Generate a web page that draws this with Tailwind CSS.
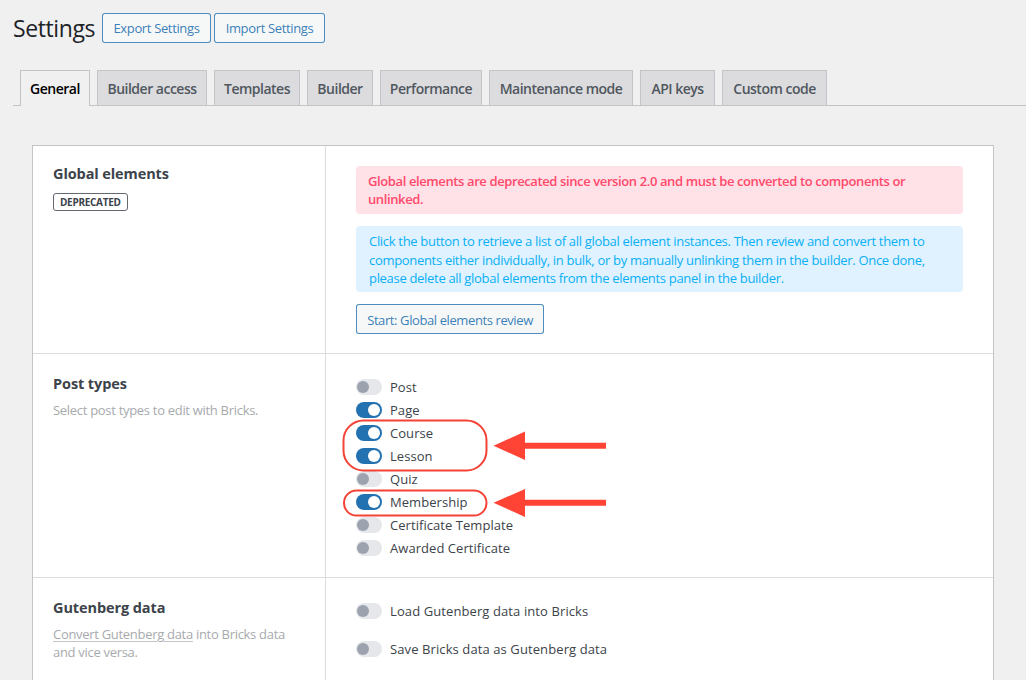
<!DOCTYPE html>
<html lang="en">
<head>
  <meta charset="UTF-8" />
  <title>Settings</title>
  <script src="https://cdn.jsdelivr.net/npm/@tailwindcss/browser@4"></script>
</head>
<body class="relative h-[680px] w-[1026px] overflow-hidden bg-[#f0f0f1] font-['Open_Sans','Noto_Sans',sans-serif] text-[13px] text-[#3c434a]">

  <div class="flex items-center pl-[13px] pt-[13px]">
    <h1 class="w-[89px] text-[23px] leading-[30px] tracking-[-0.4px] text-[#1d2327]">Settings</h1>
    <a class="mr-[3px] flex h-[30px] w-[109px] items-center justify-center rounded-[3px] border border-[#2271b1]/80 bg-[#f6f7f7] pt-[2px] text-[13px] tracking-[-0.35px] text-[#2271b1]/90">Export Settings</a>
    <a class="flex h-[30px] w-[111px] items-center justify-center rounded-[3px] border border-[#2271b1]/80 bg-[#f6f7f7] pt-[2px] text-[13px] tracking-[-0.35px] text-[#2271b1]/90">Import Settings</a>
  </div>

  <nav class="mt-[27px] ml-[13px] flex h-[36px] items-end gap-[7px] border-b border-[#c3c4c7] pl-[7px] text-[14px] font-semibold tracking-[-0.5px] text-[#50575e]">
    <a class="-mb-px flex h-[36px] w-[70px] items-center justify-center border border-b-0 border-[#c3c4c7] bg-[#f0f0f1] text-[#000]">General</a>
    <a class="flex h-[35px] w-[110px] items-center justify-center border border-b-0 border-[#c3c4c7] bg-[#dcdcde]">Builder access</a>
    <a class="flex h-[35px] w-[86px] items-center justify-center border border-b-0 border-[#c3c4c7] bg-[#dcdcde]">Templates</a>
    <a class="flex h-[35px] w-[66px] items-center justify-center border border-b-0 border-[#c3c4c7] bg-[#dcdcde]">Builder</a>
    <a class="flex h-[35px] w-[102px] items-center justify-center border border-b-0 border-[#c3c4c7] bg-[#dcdcde]">Performance</a>
    <a class="flex h-[35px] w-[144px] items-center justify-center border border-b-0 border-[#c3c4c7] bg-[#dcdcde]">Maintenance mode</a>
    <a class="flex h-[35px] w-[75px] items-center justify-center border border-b-0 border-[#c3c4c7] bg-[#dcdcde]">API keys</a>
    <a class="flex h-[35px] w-[105px] items-center justify-center border border-b-0 border-[#c3c4c7] bg-[#dcdcde]">Custom code</a>
  </nav>

  <main class="mt-[39px] ml-[32px] w-[962px] border border-[#c3c4c7] bg-white">
    <section class="grid h-[208px] grid-cols-[293px_1fr] border-b border-[#dcdcde]">
      <div class="border-r border-[#dcdcde] pl-5 pt-[17px]">
        <h2 class="text-[14.5px] leading-[21px] font-bold tracking-[-0.1px] text-[#3c434a]">Global elements</h2>
        <span class="mt-[9px] inline-block rounded-[3px] border border-[#646970] px-[6px] text-[10px] leading-[16px] font-bold tracking-[-0.3px] text-[#3c434a]">DEPRECATED</span>
      </div>
      <div class="pl-[30px] pr-[30px] pt-5">
        <div class="h-[48px] rounded-[4px] bg-[#ffe1e8] px-3 pt-[6px] text-[13px] leading-[18px] font-semibold tracking-[-0.39px] text-[#ff4a6b]">Global elements are deprecated since version 2.0 and must be converted to components or unlinked.</div>
        <div class="mt-3 h-[66px] rounded-[4px] bg-[#e0f2ff] pl-[13px] pr-3 pt-[6px] text-[13px] leading-[18.5px] tracking-[-0.31px] text-[#0ab0f5]">Click the button to retrieve a list of all global element instances. Then review and convert them to components either individually, in bulk, or by manually unlinking them in the builder. Once done, please delete all global elements from the elements panel in the builder.</div>
        <a class="mt-3 flex h-[30px] w-[188px] items-center justify-center rounded-[3px] border border-[#2271b1]/80 bg-[#f6f7f7] pt-[3px] text-[13px] tracking-[-0.4px] text-[#2271b1]/90">Start: Global elements review</a>
      </div>
    </section>

    <section class="grid h-[224px] grid-cols-[293px_1fr] border-b border-[#dcdcde]">
      <div class="border-r border-[#dcdcde] pl-5 pt-[19px]">
        <h2 class="text-[14.5px] leading-[21px] font-bold tracking-[-0.1px] text-[#3c434a]">Post types</h2>
        <p class="mt-[7px] text-[13px] leading-[18px] tracking-[-0.3px] text-[#a7aaad]">Select post types to edit with Bricks.</p>
      </div>
      <div class="flex flex-col pl-[30px] pt-[22px] text-[13px] leading-[23px] tracking-[0.05px]">
        <label class="flex h-[23px] items-center gap-2"><span class="mb-[2px] flex h-4 w-[26px] items-center justify-start rounded-full bg-[#e5e7eb] px-[1px]"><span class="size-[12px] rounded-full bg-[#9ca3af]"></span></span>Post</label>
        <label class="flex h-[23px] items-center gap-2"><span class="mb-[2px] flex h-4 w-[26px] items-center justify-end rounded-full bg-[#2271b1] px-[2px]"><span class="size-[12px] rounded-full bg-white"></span></span>Page</label>
        <label class="flex h-[23px] items-center gap-2"><span class="mb-[2px] flex h-4 w-[26px] items-center justify-end rounded-full bg-[#2271b1] px-[2px]"><span class="size-[12px] rounded-full bg-white"></span></span>Course</label>
        <label class="flex h-[23px] items-center gap-2"><span class="mb-[2px] flex h-4 w-[26px] items-center justify-end rounded-full bg-[#2271b1] px-[2px]"><span class="size-[12px] rounded-full bg-white"></span></span>Lesson</label>
        <label class="flex h-[23px] items-center gap-2"><span class="mb-[2px] flex h-4 w-[26px] items-center justify-start rounded-full bg-[#e5e7eb] px-[1px]"><span class="size-[12px] rounded-full bg-[#9ca3af]"></span></span>Quiz</label>
        <label class="flex h-[23px] items-center gap-2"><span class="mb-[2px] flex h-4 w-[26px] items-center justify-end rounded-full bg-[#2271b1] px-[2px]"><span class="size-[12px] rounded-full bg-white"></span></span>Membership</label>
        <label class="flex h-[23px] items-center gap-2"><span class="mb-[2px] flex h-4 w-[26px] items-center justify-start rounded-full bg-[#e5e7eb] px-[1px]"><span class="size-[12px] rounded-full bg-[#9ca3af]"></span></span>Certificate Template</label>
        <label class="flex h-[23px] items-center gap-2"><span class="mb-[2px] flex h-4 w-[26px] items-center justify-start rounded-full bg-[#e5e7eb] px-[1px]"><span class="size-[12px] rounded-full bg-[#9ca3af]"></span></span>Awarded Certificate</label>
      </div>
    </section>

    <section class="grid h-[110px] grid-cols-[293px_1fr]">
      <div class="border-r border-[#dcdcde] pl-5 pt-[19px]">
        <h2 class="text-[14.5px] leading-[21px] font-bold tracking-[-0.1px] text-[#3c434a]">Gutenberg data</h2>
        <p class="mt-[7px] text-[13px] leading-[18px] tracking-[-0.3px] text-[#a7aaad]"><span class="underline decoration-[#c3c4c7] underline-offset-2">Convert Gutenberg data</span> into Bricks data<br />and vice versa.</p>
      </div>
      <div class="flex flex-col gap-[15px] pl-[30px] pt-[22px] text-[13px] tracking-[0.1px]">
        <label class="flex h-[23px] items-center gap-2"><span class="mb-[2px] flex h-4 w-[26px] items-center justify-start rounded-full bg-[#e5e7eb] px-[1px]"><span class="size-[12px] rounded-full bg-[#9ca3af]"></span></span>Load Gutenberg data into Bricks</label>
        <label class="flex h-[23px] items-center gap-2"><span class="mb-[2px] flex h-4 w-[26px] items-center justify-start rounded-full bg-[#e5e7eb] px-[1px]"><span class="size-[12px] rounded-full bg-[#9ca3af]"></span></span>Save Bricks data as Gutenberg data</label>
      </div>
    </section>
  </main>

  <!-- red annotations over the screenshot -->
  <svg class="absolute left-0 top-0" width="1026" height="680" fill="none">
    <rect x="343.500" y="420.500" width="143" height="50" rx="20" stroke="#f44336" stroke-width="2" />
    <rect x="344" y="490.500" width="142.500" height="25" rx="12.500" stroke="#f44336" stroke-width="2" />
    <path d="M493.500 445.700 525 431.500V442.700H606V448.700H525V460Z" fill="#ff4436" />
    <path d="M493.500 502.700 525 489V499.700H606V505.700H525V517Z" fill="#ff4436" />
  </svg>

</body>
</html>
